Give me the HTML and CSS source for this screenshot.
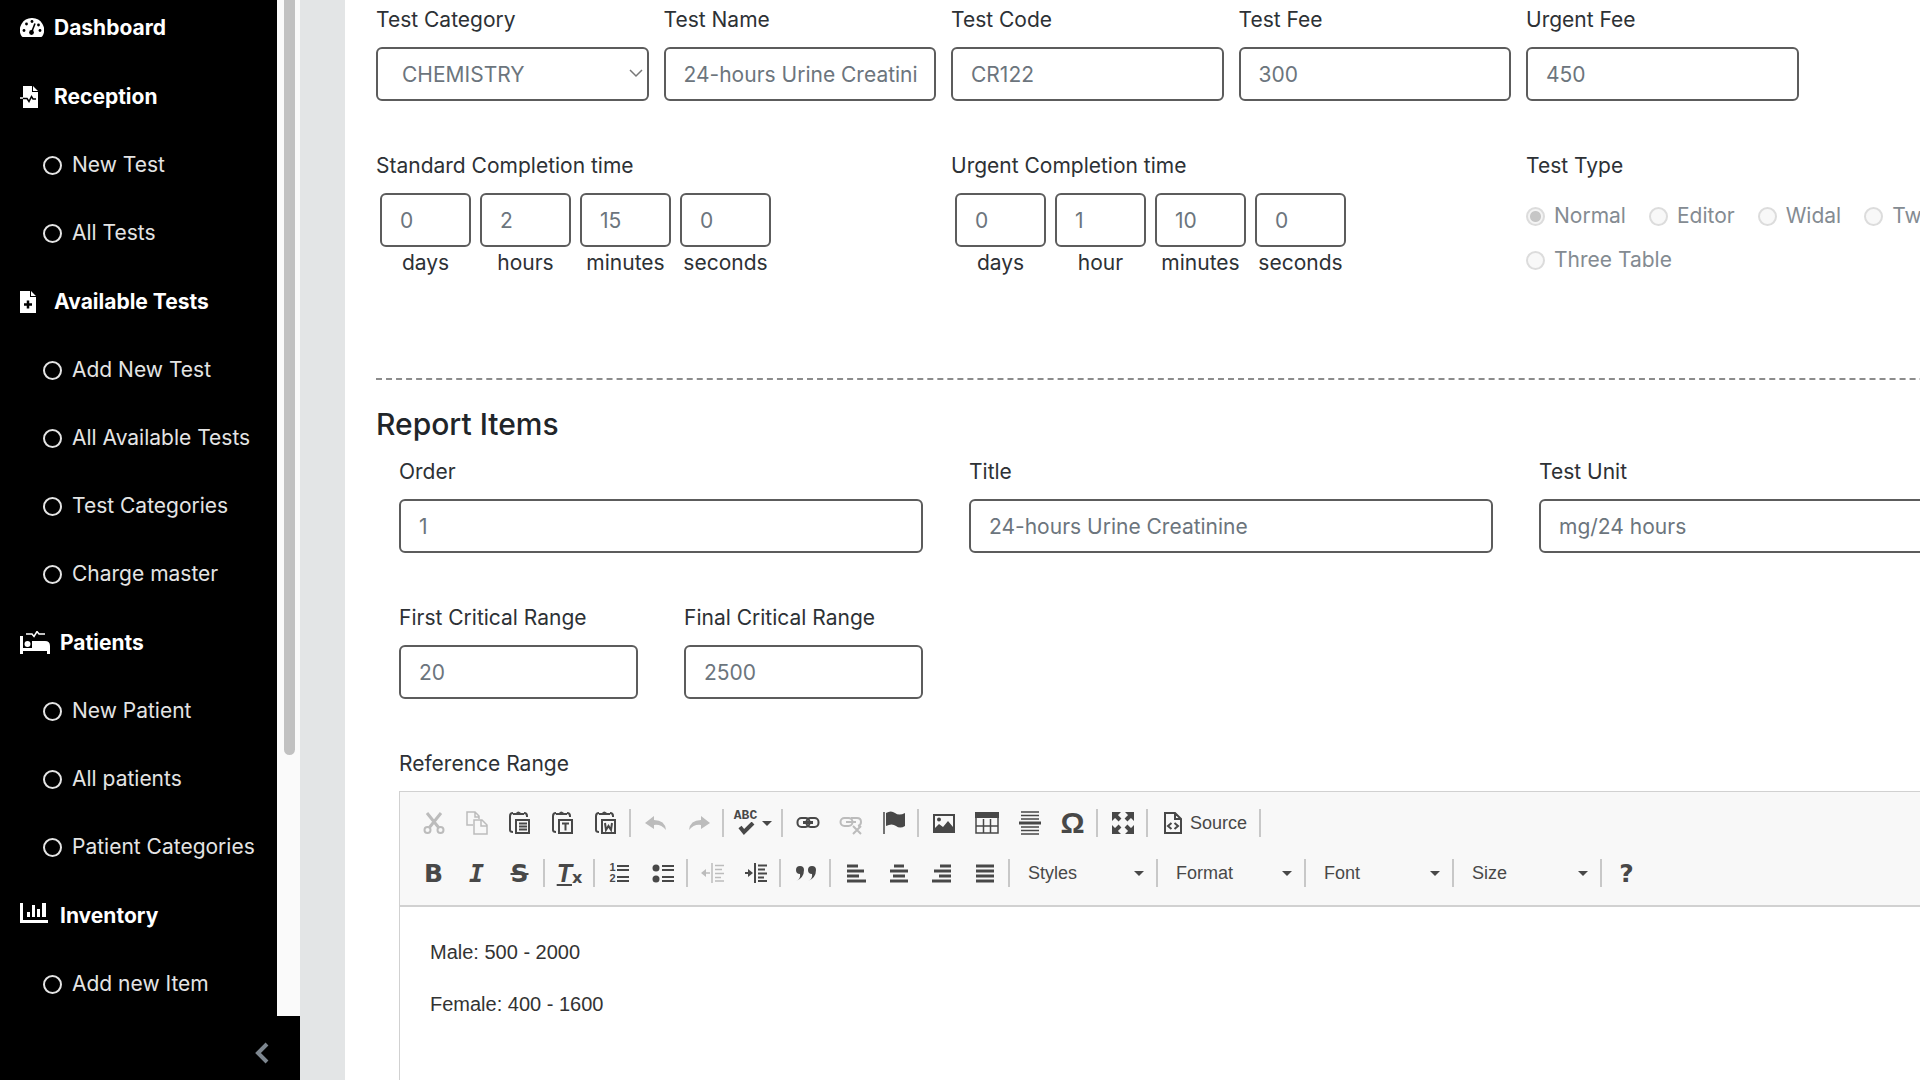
FILE: index.html
```html
<!DOCTYPE html>
<html lang="en">
<head>
  <meta charset="UTF-8">
  <meta name="viewport" content="width=device-width, initial-scale=1.0">
  <link rel="stylesheet" href="styles.css">
  <title>Test Details</title>
</head>
<body>
  <aside class="sidebar">
    <div class="menu-area">
      <nav class="menu">
        <a href="#" class="menu-head">
          <svg width="24" height="19" viewBox="0 0 24 19"><path fill="#fff" d="M12 0a12 12 0 0 0-10.500 18q.5 1 1.500 1h18q1 0 1.500-1A12 12 0 0 0 12 0z"/><g fill="#000"><circle cx="4" cy="12.500" r="1.400"/><circle cx="6.500" cy="6" r="1.400"/><circle cx="12" cy="3.500" r="1.400"/><circle cx="18.500" cy="7" r="1.400"/><circle cx="20" cy="12.500" r="1.400"/><circle cx="11.500" cy="14.500" r="2.400"/></g><path stroke="#000" stroke-width="1.600" d="M11.500 14.500l3.500-9"/></svg>
          <span>Dashboard</span>
        </a>
        <a href="#" class="menu-head">
          <svg width="24" height="22" viewBox="0 0 24 22"><path fill="#fff" d="M3 0h9v6h6v16H3z M13 0l5 5h-5z"/><path fill="none" stroke="#fff" stroke-width="1.500" d="M0 12h4"/><path fill="none" stroke="#000" stroke-width="1.500" d="M3 12.500h4l2 3 2.500-5 1.500 2.500h3"/></svg>
          <span>Reception</span>
        </a>
        <a href="#" class="menu-item"><i></i>New Test</a>
        <a href="#" class="menu-item"><i></i>All Tests</a>
        <a href="#" class="menu-head">
          <svg width="24" height="22" viewBox="0 0 24 22"><path fill="#fff" d="M0 0h10v6h6v16H0z M11 0l5 5h-5z"/><path stroke="#000" stroke-width="2.500" d="M4 13.500h8M8 9.500v8"/></svg>
          <span>Available Tests</span>
        </a>
        <a href="#" class="menu-item"><i></i>Add New Test</a>
        <a href="#" class="menu-item"><i></i>All Available Tests</a>
        <a href="#" class="menu-item"><i></i>Test Categories</a>
        <a href="#" class="menu-item"><i></i>Charge master</a>
        <a href="#" class="menu-head">
          <svg width="30" height="24" viewBox="0 0 30 24"><path fill="#fff" d="M0 5h3v12h9v-7h13q5 0 5 5v8h-3v-3H3v3H0z"/><circle cx="7.500" cy="13" r="3" fill="#fff"/><path fill="none" stroke="#fff" stroke-width="1.500" d="M6 3h6l2 2.500 3-5 2 2.500h6"/></svg>
          <span>Patients</span>
        </a>
        <a href="#" class="menu-item"><i></i>New Patient</a>
        <a href="#" class="menu-item"><i></i>All patients</a>
        <a href="#" class="menu-item"><i></i>Patient Categories</a>
        <a href="#" class="menu-head">
          <svg width="30" height="28" viewBox="0 0 30 28"><path fill="#fff" d="M0 1h3v17h25v3H0zM7 10h3v5H7zM12 3h3v12h-3zM17 7h3v8h-3zM22 1h4v14h-4z"/></svg>
          <span>Inventory</span>
        </a>
        <a href="#" class="menu-item"><i></i>Add new Item</a>
      </nav>
      <div class="scroll-track"><div class="scroll-thumb"></div></div>
    </div>
    <button class="collapse" aria-label="Collapse menu">
      <svg width="14" height="22" viewBox="0 0 14 22"><path fill="none" stroke="#7d868f" stroke-width="4" d="M12 2L3 11l9 9"/></svg>
    </button>
  </aside>

  <main class="content">
    <form class="card">
      <div class="row six">
        <div class="field">
          <label for="category">Test Category</label>
          <div class="select-box">
            <select id="category" disabled><option>CHEMISTRY</option></select>
            <svg width="14" height="9" viewBox="0 0 14 9"><path fill="none" stroke="#777" stroke-width="1.500" d="M1 1l6 6 6-6"/></svg>
          </div>
        </div>
        <div class="field"><label for="name">Test Name</label><input id="name" type="text" value="24-hours Urine Creatinine" disabled></div>
        <div class="field"><label for="code">Test Code</label><input id="code" type="text" value="CR122" disabled></div>
        <div class="field"><label for="fee">Test Fee</label><input id="fee" type="text" value="300" disabled></div>
        <div class="field"><label for="urgentFee">Urgent Fee</label><input id="urgentFee" type="text" value="450" disabled></div>
      </div>

      <div class="row three">
        <div class="field">
          <span class="title">Standard Completion time</span>
          <div class="times">
            <div><input id="sd" type="text" value="0" disabled><label for="sd">days</label></div>
            <div><input id="sh" type="text" value="2" disabled><label for="sh">hours</label></div>
            <div><input id="sm" type="text" value="15" disabled><label for="sm">minutes</label></div>
            <div><input id="ss" type="text" value="0" disabled><label for="ss">seconds</label></div>
          </div>
        </div>
        <div class="field">
          <span class="title">Urgent Completion time</span>
          <div class="times">
            <div><input id="ud" type="text" value="0" disabled><label for="ud">days</label></div>
            <div><input id="uh" type="text" value="1" disabled><label for="uh">hour</label></div>
            <div><input id="um" type="text" value="10" disabled><label for="um">minutes</label></div>
            <div><input id="us" type="text" value="0" disabled><label for="us">seconds</label></div>
          </div>
        </div>
        <div class="field">
          <span class="title">Test Type</span>
          <div class="types">
            <label><input type="radio" name="type" checked disabled>Normal</label>
            <label><input type="radio" name="type" disabled>Editor</label>
            <label><input type="radio" name="type" disabled>Widal</label>
            <label><input type="radio" name="type" disabled>Two Table</label>
            <label><input type="radio" name="type" disabled>Three Table</label>
          </div>
        </div>
      </div>

      <hr>
      <h4>Report Items</h4>

      <div class="report">
        <div class="row wide">
          <div class="field"><label for="order">Order</label><input id="order" type="text" value="1" disabled></div>
          <div class="field"><label for="title">Title</label><input id="title" type="text" value="24-hours Urine Creatinine" disabled></div>
          <div class="field"><label for="unit">Test Unit</label><input id="unit" type="text" value="mg/24 hours" disabled></div>
        </div>
        <div class="row wide">
          <div class="range">
            <div class="field"><label for="first">First Critical Range</label><input id="first" type="text" value="20" disabled></div>
            <div class="field"><label for="final">Final Critical Range</label><input id="final" type="text" value="2500" disabled></div>
          </div>
        </div>

        <span class="title">Reference Range</span>
        <div class="editor">
          <div class="toolbar">
            <div class="tools">
              <button type="button" class="off" aria-label="Cut"><svg viewBox="0 0 24 24"><path stroke-width="3" d="M5 2l12 15M19 2L7 17"/><circle cx="5.500" cy="19" r="3"/><circle cx="18.500" cy="19" r="3"/></svg></button>
              <button type="button" class="off" aria-label="Copy"><svg viewBox="0 0 24 24"><path stroke-width="1.500" d="M8 14H2V1h8l4 4v3M10 1v5h4M9 9h8l5 5v9H9zM16 9v6h6"/></svg></button>
              <button type="button" aria-label="Paste"><svg viewBox="0 0 24 24"><path d="M5 2q-3 0-3 3v14q0 2 3 2M16 2q3 0 3 3v1M8 9h13v13H8zM11 12.500h8M11 15.500h8M11 18.500h8"/><path class="fill" d="M5 4V2h3q2-3 5 0h3v2z"/></svg></button>
              <button type="button" aria-label="Paste as text"><svg viewBox="0 0 24 24"><path d="M5 2q-3 0-3 3v14q0 2 3 2M16 2q3 0 3 3v1M8 9h13v13H8zM11 12.500h7M14.500 12.500v7"/><path class="fill" d="M5 4V2h3q2-3 5 0h3v2z"/></svg></button>
              <button type="button" aria-label="Paste from Word"><svg viewBox="0 0 24 24"><path d="M5 2q-3 0-3 3v14q0 2 3 2M16 2q3 0 3 3v1M8 9h13v13H8zM11 12l1 7 2.500-4 2.500 4 1-7"/><path class="fill" d="M5 4V2h3q2-3 5 0h3v2z"/></svg></button>
              <i class="sep"></i>
              <button type="button" class="off" aria-label="Undo"><svg viewBox="0 0 24 24"><path class="fill" d="M1 12l9-7v4q11 0 12 10-5-6-12-5v4z"/></svg></button>
              <button type="button" class="off" aria-label="Redo"><svg viewBox="0 0 24 24"><path class="fill" d="M23 12l-9-7v4Q3 9 2 19q5-6 12-5v4z"/></svg></button>
              <i class="sep"></i>
              <button type="button" class="spell" aria-label="Spell check"><span class="abc">ABC<svg viewBox="0 0 18 14"><path stroke-width="4" d="M3 5l4 5 9-9"/></svg></span><b class="caret"></b></button>
              <i class="sep"></i>
              <button type="button" aria-label="Link"><svg viewBox="0 0 24 24"><rect x="1.500" y="7" width="12" height="9" rx="4"/><rect x="10.500" y="7" width="12" height="9" rx="4"/><path stroke-width="3" d="M7 11.500h10"/></svg></button>
              <button type="button" class="off" aria-label="Unlink"><svg viewBox="0 0 24 24"><rect x="1.500" y="7" width="12" height="8" rx="4"/><path d="M12 7h6q4 0 4 4 0 3-3 4M7 11h10M14 15l8 8M22 15l-8 8"/></svg></button>
              <button type="button" aria-label="Anchor"><svg viewBox="0 0 24 24"><path stroke-width="1.500" d="M2 1v22"/><path class="fill" d="M4 2q5-3 9 0t10 0v13q-5 3-9 0t-10 0z"/></svg></button>
              <i class="sep"></i>
              <button type="button" aria-label="Image"><svg viewBox="0 0 24 24"><path d="M2 4h20v17H2z"/><circle class="fill" cx="7" cy="8.500" r="2"/><path class="fill" d="M3 20v-3l4-4 4 3 5-6 5 6v4z"/></svg></button>
              <button type="button" aria-label="Table"><svg viewBox="0 0 24 24"><path stroke-width="1.500" d="M1 2h22v20H1zM1 15h22M8.500 8v14M15.500 8v14"/><path class="fill" d="M0 1h24v6H0z"/></svg></button>
              <button type="button" aria-label="Horizontal line"><svg viewBox="0 0 24 24"><path stroke-width="1.500" d="M3 1h18M3 4.500h18M3 8h18M3 16h18M3 19.500h18M3 23h18"/><path stroke-width="3" d="M1 12h22"/></svg></button>
              <button type="button" class="omega" aria-label="Special character">Ω</button>
              <i class="sep"></i>
              <button type="button" aria-label="Maximize"><svg viewBox="0 0 24 24"><path stroke-width="4" d="M4 4l5 5M20 4l-5 5M4 20l5-5M20 20l-5-5"/><path class="fill" d="M1 1h9l-9 9zM23 1h-9l9 9zM1 23h9l-9-9zM23 23h-9l9-9z"/></svg></button>
              <i class="sep"></i>
              <button type="button" class="source"><svg viewBox="0 0 24 24"><path d="M4 2h10l6 6v14H4zM14 2v6h6M10.500 12L7 15l3.500 3M13.500 12l3.500 3-3.500 3"/></svg>Source</button>
              <i class="sep"></i>
            </div>
            <div class="tools">
              <button type="button" class="letter" aria-label="Bold"><b>B</b></button>
              <button type="button" class="letter mono" aria-label="Italic"><em>I</em></button>
              <button type="button" class="letter" aria-label="Strike through"><s>S</s></button>
              <i class="sep"></i>
              <button type="button" class="letter clear" aria-label="Remove format"><em>T</em><sub>x</sub></button>
              <i class="sep"></i>
              <button type="button" class="numbers" aria-label="Numbered list"><span>1<br>2</span><svg viewBox="0 0 14 24"><path d="M1 5h12M1 9h12M1 16h12M1 20h12"/></svg></button>
              <button type="button" aria-label="Bulleted list"><svg viewBox="0 0 24 24"><path d="M11 5h12M11 9h12M11 16h12M11 20h12"/><circle class="fill" cx="5" cy="7" r="3.500"/><circle class="fill" cx="5" cy="18" r="3.500"/></svg></button>
              <i class="sep"></i>
              <button type="button" class="off" aria-label="Outdent"><svg viewBox="0 0 24 24"><path stroke-width="1.500" d="M11 2v20M14 4.500h9M14 8.500h7M14 12.500h9M14 16.500h6M14 20h9M3 12h6"/><path class="fill" d="M0 12l5-4v8z"/></svg></button>
              <button type="button" aria-label="Indent"><svg viewBox="0 0 24 24"><path d="M11 2v20M14 4.500h9M14 8.500h7M14 12.500h9M14 16.500h6M14 20h9M1 12h5"/><path class="fill" d="M9 12L4 8v8z"/></svg></button>
              <i class="sep"></i>
              <button type="button" aria-label="Block quote"><svg viewBox="0 0 24 24"><path class="fill" d="M2 20q5-2 4-7a4 4 0 1 1 4-4q0 8-8 11zM14 20q5-2 4-7a4 4 0 1 1 4-4q0 8-8 11z"/></svg></button>
              <i class="sep"></i>
              <button type="button" aria-label="Align left"><svg viewBox="0 0 24 24"><path stroke-width="3" d="M3 5h11M3 10h17M3 15h12M3 20h19"/></svg></button>
              <button type="button" aria-label="Center"><svg viewBox="0 0 24 24"><path stroke-width="3" d="M7 5h10M3 10h18M6 15h12M3 20h18"/></svg></button>
              <button type="button" aria-label="Align right"><svg viewBox="0 0 24 24"><path stroke-width="3" d="M10 5h11M4 10h17M9 15h12M2 20h19"/></svg></button>
              <button type="button" aria-label="Justify"><svg viewBox="0 0 24 24"><path stroke-width="3" d="M3 5h18M3 10h18M3 15h18M3 20h18"/></svg></button>
              <i class="sep"></i>
              <button type="button" class="combo">Styles<b class="caret"></b></button>
              <i class="sep"></i>
              <button type="button" class="combo">Format<b class="caret"></b></button>
              <i class="sep"></i>
              <button type="button" class="combo">Font<b class="caret"></b></button>
              <i class="sep"></i>
              <button type="button" class="combo">Size<b class="caret"></b></button>
              <i class="sep"></i>
              <button type="button" class="letter help" aria-label="Help">?</button>
            </div>
          </div>
          <div class="editor-text">
            <p>Male: 500 - 2000</p>
            <p>Female: 400 - 1600</p>
          </div>
        </div>
      </div>
    </form>
  </main>
</body>
</html>
```
FILE: styles.css
```css
* {
  box-sizing: border-box;
}
body {
  margin: 0;
  height: 100vh;
  display: flex;
  overflow: hidden;
  background-color: #e3e5e6;
  color: #2d3135;
  font-family: Inter, "Liberation Sans", sans-serif;
  font-size: 21px;
  line-height: 34px;
}
button {
  border: none;
  padding: 0;
  background: none;
  font-family: inherit;
}

/* sidebar */
.sidebar {
  width: 300px;
  flex-shrink: 0;
  display: flex;
  flex-direction: column;
  background-color: #000;
}
.menu-area {
  flex: 1;
  min-height: 0;
  display: flex;
}
.menu {
  flex: 1;
  margin-top: -7px;
}
.menu a {
  display: flex;
  align-items: center;
  color: #e4e4e4;
  text-decoration: none;
  white-space: nowrap;
}
.menu .menu-head {
  height: 69px;
  padding-left: 20px;
  gap: 10px;
  color: #fff;
  font-weight: 700;
}
.menu .menu-item {
  height: 68px;
  padding-left: 43px;
  gap: 10px;
}
.menu-item i {
  width: 19px;
  height: 19px;
  border: 2px solid #e4e4e4;
  border-radius: 50%;
}
.scroll-track {
  width: 23px;
  padding: 0 5px 0 7px;
  background-color: #fafafa;
}
.scroll-thumb {
  height: 755px;
  border-radius: 0 0 6px 6px;
  background-color: #c1c1c1;
}
.collapse {
  height: 64px;
  display: flex;
  align-items: center;
  justify-content: flex-end;
  padding: 10px 31px 0 0;
}

/* form */
.content {
  flex: 1;
  min-width: 0;
  padding-left: 45px;
}
.card {
  min-height: 100%;
  padding: 3px 0 0 31px;
  background-color: #fff;
  width: calc(100% + 166px);
}
.row {
  display: grid;
}
.six {
  grid-template-columns: repeat(6, 1fr);
  gap: 15px;
  margin-bottom: 48px;
}
.three {
  grid-template-columns: repeat(3, 1fr);
  gap: 15px;
}
.wide {
  grid-template-columns: repeat(3, 1fr);
  gap: 46px;
  margin-bottom: 48px;
}
.range {
  display: grid;
  grid-template-columns: 1fr 1fr;
  gap: 46px;
}
.field > label, .title {
  display: block;
  margin-bottom: 10px;
}
input[type=text], select {
  display: block;
  width: 100%;
  height: 54px;
  padding: 1px 17px 0 18px;
  border: 2px solid #5c5c5c;
  border-radius: 6px;
  background-color: #fff;
  color: #6c757d;
  font-family: inherit;
  font-size: 21px;
  opacity: 1;
}
select {
  appearance: none;
  padding-left: 24px;
}
.select-box {
  position: relative;
}
.select-box svg {
  position: absolute;
  right: 6px;
  top: 22px;
}
.times {
  display: flex;
  gap: 9px;
  padding-left: 4px;
}
.times div {
  width: 91px;
  text-align: center;
}
.times label {
  display: block;
  height: 32px;
  line-height: 32px;
}
.types {
  display: flex;
  flex-wrap: wrap;
  gap: 10px 23px;
  padding-top: 6px;
  color: #848b92;
}
.types label {
  display: flex;
  align-items: center;
  gap: 9px;
}
.types input {
  appearance: none;
  width: 19px;
  height: 19px;
  margin: 0;
  border: 2px solid #dcdcdc;
  border-radius: 50%;
  background-color: #f8f8f8;
}
.types input:checked {
  background: radial-gradient(circle, #c6c6c6 5px, #f4f4f4 6px);
}
hr {
  margin: 99px 0 0;
  border: none;
  border-top: 2px dashed #8c8c8c;
}
h4 {
  margin: 23px 0 10px;
  color: #212529;
  font-size: 30px;
  font-weight: 500;
  line-height: 42px;
}
.report {
  padding: 0 23px;
}

/* editor */
.editor {
  border: 1px solid #d1d1d1;
  font-family: "Liberation Sans", Arial, sans-serif;
}
.toolbar {
  padding: 6px 12px 7px;
  background-color: #f8f8f8;
  border-bottom: 2px solid #d1d1d1;
}
.tools {
  display: flex;
  align-items: center;
  height: 50px;
}
.tools button {
  width: 43px;
  height: 40px;
  flex-shrink: 0;
  display: flex;
  align-items: center;
  justify-content: center;
  color: #484848;
}
.tools svg {
  width: 24px;
  height: 24px;
  fill: none;
  stroke: currentColor;
  stroke-width: 2;
}
.tools .fill {
  fill: currentColor;
  stroke: none;
}
.tools .off {
  color: #bcbcbc;
}
.sep {
  width: 2px;
  height: 28px;
  margin: 0 3px 0 2px;
  background-color: #c8c8c8;
}
.caret {
  border: 5px solid transparent;
  border-top: 5px solid #484848;
  border-bottom: none;
}
.tools .spell {
  width: 52px;
  gap: 5px;
}
.abc {
  display: flex;
  flex-direction: column;
  align-items: center;
  font-family: "Liberation Mono", monospace;
  font-size: 13px;
  font-weight: 700;
  line-height: 12px;
}
.tools .abc svg {
  width: 18px;
  height: 14px;
}
.tools .omega {
  font-size: 30px;
  font-weight: 700;
}
.tools .source {
  width: 106px;
  gap: 5px;
  font-size: 18px;
}
.tools .letter {
  font-size: 25px;
  font-family: "DejaVu Sans", sans-serif;
  font-weight: 700;
}
.tools .mono {
  font-family: "DejaVu Sans Mono", monospace;
}
.tools .clear em {
  font-family: "Liberation Sans", sans-serif;
  text-decoration: underline;
}
.clear sub {
  font-size: 16px;
  padding-top: 8px;
}
.numbers span {
  font-size: 11px;
  font-weight: 700;
  line-height: 11px;
}
.tools .numbers svg {
  width: 14px;
}
.tools .combo {
  width: 141px;
  padding: 0 10px 0 15px;
  justify-content: space-between;
  font-size: 18px;
}
.editor-text {
  min-height: 300px;
  padding: 28px 30px;
  color: #333;
  font-size: 20px;
}
.editor-text p {
  margin: 0 0 18px;
}
```
